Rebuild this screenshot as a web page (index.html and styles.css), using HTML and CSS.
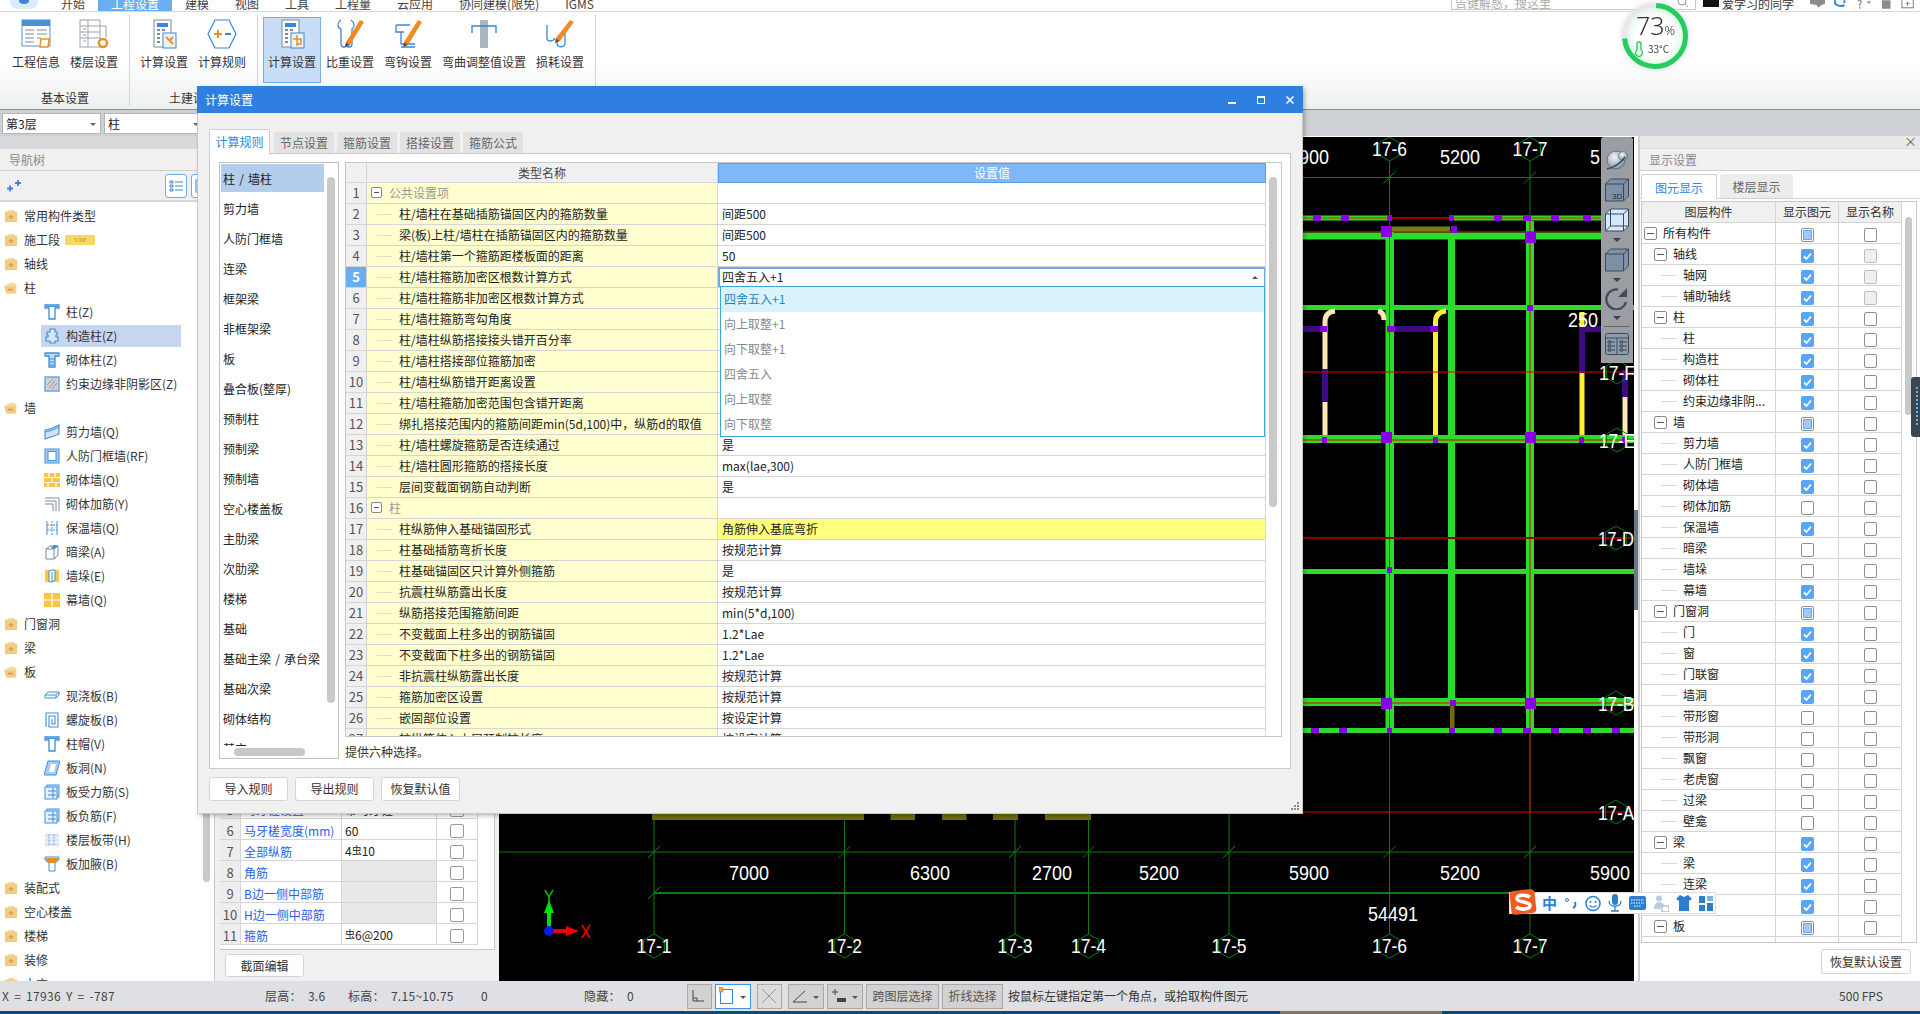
FILE: index.html
```html
<!DOCTYPE html>
<html lang="zh">
<head>
<meta charset="utf-8">
<title>计算设置</title>
<link rel="stylesheet" href="styles.css">
</head>
<body>
<svg class="defs" width="0" height="0">
  <defs>
    <symbol id="f-plus" viewBox="0 0 16 16"><path d="M5 1h7v3H5z" fill="#f5dda0"/><rect x="1" y="3" width="14" height="12" fill="#f0cd86"/><path d="M8 6.500v5M5.500 9h5" stroke="#d99a3a" stroke-width="1.500"/></symbol>
    <symbol id="f-minus" viewBox="0 0 18 16"><path d="M6 1h8v3H6z" fill="#f5dda0"/><path d="M3 3h13v12H3z" fill="#f5dda0"/><path d="M0 5h15v10H3z" fill="#f0cd86"/><path d="M5 10h6" stroke="#d99a3a" stroke-width="2"/></symbol>
    <symbol id="i-t" viewBox="0 0 16 16"><path d="M1 1h14v3H11v11H5V4H1z" fill="#fff" stroke="#3d8fd8" stroke-width="1.300"/><path d="M2 2.500h12" stroke="#3d8fd8"/></symbol>
    <symbol id="i-puz" viewBox="0 0 16 16"><path d="M6 1h5v3h2v3h-1v2h2v4h-3v2H6v-2H2V9h2V7H3V4h3z" fill="#d8e6f6" stroke="#3d8fd8" stroke-width="1.200"/></symbol>
    <symbol id="i-tb" viewBox="0 0 16 16"><path d="M1 1h14v3H11v11H5V4H1z" fill="#bcd9f4" stroke="#3d8fd8" stroke-width="1.300"/><path d="M5 7h6M5 10h6M5 13h6" stroke="#3d8fd8"/></symbol>
    <symbol id="i-hatch" viewBox="0 0 16 16"><rect x="1" y="1" width="14" height="14" fill="#d0d0d0" stroke="#6aa7e6" stroke-width="1.500"/><path d="M3 9l6-6M5 12l6-7M8 13l5-6" stroke="#999" fill="none"/></symbol>
    <symbol id="i-shear" viewBox="0 0 16 16"><path d="M1 6Q8 5 15 1v9Q8 13 1 15z" fill="#cfe2f7" stroke="#3d8fd8" stroke-width="1.100"/><path d="M1 8Q8 7 15 3" stroke="#3d8fd8" fill="none"/></symbol>
    <symbol id="i-rf" viewBox="0 0 16 16"><rect x="1" y="1" width="14" height="14" fill="#a8ccf0" stroke="#3d8fd8"/><rect x="4" y="3.500" width="8" height="9" fill="#fff" stroke="#3d8fd8"/></symbol>
    <symbol id="i-brick" viewBox="0 0 16 16"><rect x="0" y="1" width="16" height="14" fill="#fbc441"/><path d="M0 5.500h16M0 10.500h16M5 1v4.500M11 1v4.500M8 5.500v5M4 10.500V15M12 10.500V15" stroke="#fff" stroke-width="1.200"/></symbol>
    <symbol id="i-add" viewBox="0 0 16 16"><path d="M1 2h14v13M1 5h11v10M1 8h8v7" fill="none" stroke="#7a8a99"/></symbol>
    <symbol id="i-ins" viewBox="0 0 16 16"><path d="M3 1v14M13 1v14" stroke="#3d8fd8"/><path d="M8 1v14M3 5h10M3 10h10" stroke="#3d8fd8" stroke-dasharray="2 1"/></symbol>
    <symbol id="i-box" viewBox="0 0 16 16"><path d="M2 5l4-3h8v9l-4 4H2z" fill="#fff" stroke="#7a8a99"/><path d="M2 5h8v10M10 5l4-3" fill="none" stroke="#7a8a99"/><path d="M10 1l4 1-4 3-3-1z" fill="#3d8fd8"/></symbol>
    <symbol id="i-duo" viewBox="0 0 16 16"><rect x="1" y="2" width="14" height="12" fill="#fbc441"/><path d="M5 3l3-1h3v10l-3 2H5z" fill="#fff" stroke="#3d8fd8"/><path d="M8 4v10" stroke="#3d8fd8"/></symbol>
    <symbol id="i-cw" viewBox="0 0 16 16"><rect y="1" width="16" height="14" fill="#fbc441"/><path d="M0 8h16M8 1v14" stroke="#fff" stroke-width="1.200"/></symbol>
    <symbol id="i-slab" viewBox="0 0 16 16"><path d="M1 7l3-3h11v3l-3 3H1zM1 7h11v3M12 7l3-3" fill="#fff" stroke="#3d8fd8"/></symbol>
    <symbol id="i-sp" viewBox="0 0 16 16"><path d="M2 15V1h12v14H5V4h6v8H8V7" fill="none" stroke="#3d8fd8" stroke-width="1.100"/></symbol>
    <symbol id="i-hole" viewBox="0 0 16 16"><path d="M4 1h12l-4 14H0z" fill="#a8ccf0" stroke="#3d8fd8"/><path d="M7 4h5l-2 8H5z" fill="#fff"/></symbol>
    <symbol id="i-s" viewBox="0 0 16 16"><rect x="3" y="1" width="12" height="12" fill="#cfe2f7" stroke="#3d8fd8"/><rect x="1" y="3" width="12" height="12" fill="#e6f0fb" stroke="#3d8fd8"/><path d="M9 4v10M4 7h8M4 11h8" stroke="#3d8fd8"/></symbol>
    <symbol id="i-band" viewBox="0 0 16 16"><rect x="1" y="2" width="14" height="12" fill="#d8e6f6"/><path d="M1 6h14M1 10h14" stroke="#fff"/><path d="M5 2v12M10 2v12" stroke="#7fa8d6" stroke-dasharray="2 1"/></symbol>
    <symbol id="i-hau" viewBox="0 0 16 16"><path d="M1 1h14v3l-4 3v8H5V7L1 4z" fill="#fff" stroke="#3d8fd8"/><path d="M2 2h12v2l-3 3H5L2 4z" fill="#f08a24"/></symbol>
    <symbol id="chk" viewBox="0 0 13 14"><rect width="13" height="14" rx="2" fill="#58a4f5"/><path d="M3 7.500l2.500 2.500L10 4.500" fill="none" stroke="#fff" stroke-width="1.800"/></symbol>
    <polygon id="hx" points="0,-12 10.400,-6 10.400,6 0,12 -10.400,6 -10.400,-6" fill="none" stroke="#0a7d0a"/>
    <path id="tk" d="M-6 6L6-6" stroke="#0a7d0a"/>
    <radialGradient id="sph" cx=".4" cy=".35" r=".7"><stop offset="0" stop-color="#f2f5f8"/><stop offset="1" stop-color="#7d8ea2"/></radialGradient>
  </defs>
</svg>

<div class="app">
  <header class="menubar">
    <div class="logo"><span class="logo-ball"></span></div>
    <span class="mt">开始</span><span class="mt on">工程设置</span><span class="mt">建模</span><span class="mt">视图</span><span class="mt">工具</span><span class="mt">工程量</span><span class="mt">云应用</span><span class="mt">协同建模(限免)</span><span class="mt">IGMS</span>
    <div class="search"><span>告键解惑，搜这里</span><svg width="12" height="10" viewBox="0 0 12 10"><circle cx="5" cy="1" r="4" fill="none" stroke="#999"/><path d="M8 4l3 3" stroke="#999"/></svg></div>
    <span class="avatar"></span><span class="uname">爱学习的同学</span>
    <div class="tops">
      <svg width="16" height="9" viewBox="0 0 16 9"><path d="M0-4h16v8l-4 1-3 3-2-3-7-1z" fill="#8c8c8c"/></svg>
      <svg width="14" height="9" viewBox="0 0 14 9"><path d="M1 0v2c0 4 8 5 10 3M11 0v3" fill="none" stroke="#2b83dc" stroke-width="2"/></svg>
      <svg width="18" height="9" viewBox="0 0 18 9"><path d="M2 1c3-2 5 1 2 3v2M4 7v2" fill="none" stroke="#999" stroke-width="1.500"/><path d="M11 1h5l-2.500 3z" fill="#999"/></svg>
      <svg width="10" height="9" viewBox="0 0 10 9"><rect width="9" height="9" fill="#8c8c8c"/></svg>
      <svg width="14" height="9" viewBox="0 0 14 9"><rect x="1" y="-2" width="12" height="10" fill="none" stroke="#777"/><path d="M7 6V2M5 4l2-2 2 2" fill="none" stroke="#777"/></svg>
    </div>
  </header>

  <section class="ribbon">
    <div class="rgroup rg1">
      <div class="rbtns">
        <div class="rbtn"><svg class="ri" width="30" height="30" viewBox="0 0 30 30"><rect x="1" y="1" width="28" height="26" fill="#fff" stroke="#5b8fc9"/><rect x="1" y="1" width="28" height="6" fill="#4a90d9"/><path d="M4 11h9M4 15h9M4 19h9M4 23h9M16 11h10M16 15h10M16 19h4" stroke="#7a8a99"/><path d="M20 20h8l-1 8h-8z" fill="#fff" stroke="#e8912a" stroke-width="1.500"/></svg><span>工程信息</span></div>
        <div class="rbtn"><svg class="ri" width="30" height="30" viewBox="0 0 30 30"><rect x="1" y="1" width="20" height="27" fill="#fff" stroke="#9aa3ab"/><path d="M1 7h20M1 13h20M1 19h20M9 1v27M21 7h6v12" fill="none" stroke="#9aa3ab"/><path d="M4 10h3M4 16h3M4 22h3" stroke="#9aa3ab"/><circle cx="24" cy="24" r="4" fill="#fff" stroke="#e8912a" stroke-width="2.500"/></svg><span>楼层设置</span></div>
      </div>
      <div class="rlabel">基本设置</div>
    </div>
    <div class="rgroup">
      <div class="rbtns">
        <div class="rbtn"><svg class="ri" width="30" height="30" viewBox="0 0 30 30"><rect x="5" y="1" width="17" height="27" fill="#fff" stroke="#7a8a99"/><rect x="8" y="4" width="11" height="4" fill="#3a86d8"/><path d="M8 11h3M13 11h3M8 15h3M8 19h3M8 23h3" stroke="#7a8a99" stroke-width="2"/><rect x="14" y="14" width="13" height="15" fill="#eaf3fc" stroke="#3a86d8"/><path d="M17 18l7 7M24 18l-3 3" stroke="#e8912a" stroke-width="2"/></svg><span>计算设置</span></div>
        <div class="rbtn"><svg class="ri" width="30" height="30" viewBox="0 0 30 30"><path d="M8 1h14l7 14-7 14H8L1 15z" fill="#fff" stroke="#3a86d8" stroke-width="1.200"/><path d="M7 15h8M11 11v8" stroke="#e8912a" stroke-width="2"/><path d="M18 15h6" stroke="#3a86d8" stroke-width="2"/></svg><span>计算规则</span></div>
      </div>
      <div class="rlabel">土建设置</div>
    </div>
    <div class="rgroup">
      <div class="rbtns">
        <div class="rbtn sel"><svg class="ri" width="30" height="30" viewBox="0 0 30 30"><rect x="5" y="1" width="17" height="27" fill="#fff" stroke="#7a8a99"/><rect x="8" y="4" width="11" height="4" fill="#3a86d8"/><path d="M8 11h3M13 11h3M8 15h3M8 19h3M8 23h3" stroke="#7a8a99" stroke-width="2"/><rect x="14" y="14" width="13" height="15" fill="#eaf3fc" stroke="#3a86d8"/><path d="M20 16v11M16 20h8v5h-4" fill="none" stroke="#e8912a" stroke-width="1.500"/></svg><span>计算设置</span></div>
        <div class="rbtn"><svg class="ri" width="30" height="30" viewBox="0 0 30 30"><path d="M6 1C2 4 2 8 6 10v15c0 4 6 4 6 0M16 1c4 3 4 7 1 9v15c0 4-6 4-6 0" fill="none" stroke="#3a86d8" stroke-width="1.300"/><path d="M29 3l-4-2-14 22 4 3z" fill="#f08a24"/><path d="M11 23l-1 5 5-2z" fill="#7a4a20"/></svg><span>比重设置</span></div>
        <div class="rbtn"><svg class="ri" width="30" height="30" viewBox="0 0 30 30"><path d="M3 6h14M3 6v7h5v12h14M8 28h14M3 13h8" fill="none" stroke="#3a86d8" stroke-width="1.300"/><path d="M29 3l-4-2-14 22 4 3z" fill="#f08a24"/><path d="M11 23l-1 5 5-2z" fill="#7a4a20"/></svg><span>弯钩设置</span></div>
        <div class="rbtn wide"><svg class="ri" width="30" height="30" viewBox="0 0 30 30"><rect x="11" y="1" width="8" height="28" fill="#a9b5c1"/><path d="M3 14V7h24v7" fill="none" stroke="#3a86d8" stroke-width="1.400"/></svg><span>弯曲调整值设置</span></div>
        <div class="rbtn"><svg class="ri" width="30" height="30" viewBox="0 0 30 30"><path d="M2 6v13c0 4 6 4 8 0M20 14v10c0 5-8 5-8 0v-2" fill="none" stroke="#3a86d8" stroke-width="1.300"/><path d="M29 3l-4-2-14 18 4 3z" fill="#f08a24"/><path d="M11 19l-1 5 5-2z" fill="#7a4a20"/></svg><span>损耗设置</span></div>
      </div>
      <div class="rlabel">钢筋设置</div>
    </div>
  </section>

  <section class="combos">
    <div class="combo c1">第3层<i></i></div>
    <div class="combo c2">柱<i></i></div>
  </section>

  <main class="main">
    <aside class="nav">
      <div class="band"></div>
      <div class="ptitle">导航树</div>
      <div class="navtools">
        <svg class="spark" width="14" height="12" viewBox="0 0 14 12"><path d="M0 8.500h6M3 5.500v6M8 3h6M11 0v6" stroke="#3a86d8" stroke-width="1.800"/></svg>
        <span class="nbtn"><svg width="14" height="14" viewBox="0 0 14 14"><path d="M1 2h3v2H1zM1 6h3v2H1zM1 10h3v2H1zM6 3h8M6 7h8M6 11h8" fill="none" stroke="#3a86d8"/></svg></span>
        <span class="nbtn"><svg width="14" height="14" viewBox="0 0 14 14"><rect x="1" y="1" width="12" height="12" fill="none" stroke="#3a86d8"/></svg></span>
      </div>
      <ul class="tree">
        <li><svg class="fd" width="14" height="16"><use href="#f-plus"/></svg>常用构件类型</li>
        <li><svg class="fd" width="14" height="16"><use href="#f-plus"/></svg>施工段<span class="vip">VIP</span></li>
        <li><svg class="fd" width="14" height="16"><use href="#f-plus"/></svg>轴线</li>
        <li><svg class="fd" width="17" height="16"><use href="#f-minus"/></svg>柱</li>
        <li class="s"><svg width="16" height="16"><use href="#i-t"/></svg>柱(Z)</li>
        <li class="s cur"><svg width="16" height="16"><use href="#i-puz"/></svg>构造柱(Z)</li>
        <li class="s"><svg width="16" height="16"><use href="#i-tb"/></svg>砌体柱(Z)</li>
        <li class="s"><svg width="16" height="16"><use href="#i-hatch"/></svg>约束边缘非阴影区(Z)</li>
        <li><svg class="fd" width="17" height="16"><use href="#f-minus"/></svg>墙</li>
        <li class="s"><svg width="16" height="16"><use href="#i-shear"/></svg>剪力墙(Q)</li>
        <li class="s"><svg width="16" height="16"><use href="#i-rf"/></svg>人防门框墙(RF)</li>
        <li class="s"><svg width="16" height="16"><use href="#i-brick"/></svg>砌体墙(Q)</li>
        <li class="s"><svg width="16" height="16"><use href="#i-add"/></svg>砌体加筋(Y)</li>
        <li class="s"><svg width="16" height="16"><use href="#i-ins"/></svg>保温墙(Q)</li>
        <li class="s"><svg width="16" height="16"><use href="#i-box"/></svg>暗梁(A)</li>
        <li class="s"><svg width="16" height="16"><use href="#i-duo"/></svg>墙垛(E)</li>
        <li class="s"><svg width="16" height="16"><use href="#i-cw"/></svg>幕墙(Q)</li>
        <li><svg class="fd" width="14" height="16"><use href="#f-plus"/></svg>门窗洞</li>
        <li><svg class="fd" width="14" height="16"><use href="#f-plus"/></svg>梁</li>
        <li><svg class="fd" width="17" height="16"><use href="#f-minus"/></svg>板</li>
        <li class="s"><svg width="16" height="16"><use href="#i-slab"/></svg>现浇板(B)</li>
        <li class="s"><svg width="16" height="16"><use href="#i-sp"/></svg>螺旋板(B)</li>
        <li class="s"><svg width="16" height="16"><use href="#i-t"/></svg>柱帽(V)</li>
        <li class="s"><svg width="16" height="16"><use href="#i-hole"/></svg>板洞(N)</li>
        <li class="s"><svg width="16" height="16"><use href="#i-s"/></svg>板受力筋(S)</li>
        <li class="s"><svg width="16" height="16"><use href="#i-s"/></svg>板负筋(F)</li>
        <li class="s"><svg width="16" height="16"><use href="#i-band"/></svg>楼层板带(H)</li>
        <li class="s"><svg width="16" height="16"><use href="#i-hau"/></svg>板加腋(B)</li>
        <li><svg class="fd" width="14" height="16"><use href="#f-plus"/></svg>装配式</li>
        <li><svg class="fd" width="14" height="16"><use href="#f-plus"/></svg>空心楼盖</li>
        <li><svg class="fd" width="14" height="16"><use href="#f-plus"/></svg>楼梯</li>
        <li><svg class="fd" width="14" height="16"><use href="#f-plus"/></svg>装修</li>
        <li><svg class="fd" width="14" height="16"><use href="#f-plus"/></svg>土方</li>
      </ul>
      <div class="navsb"></div>
    </aside>

    <section class="props">
      <div class="pbox">
      <table class="ptable">
        <tr><td class="n">1</td><td class="k">名称</td><td>GZ-1</td><td class="c"><span class="cb"></span></td></tr>
        <tr><td class="n">2</td><td class="k">类别</td><td>构造柱</td><td class="c"><span class="cb"></span></td></tr>
        <tr><td class="n">3</td><td class="k">截面宽度(mm)</td><td>240</td><td class="c"><span class="cb"></span></td></tr>
        <tr><td class="n">4</td><td class="k">截面高度(mm)</td><td>240</td><td class="c"><span class="cb"></span></td></tr>
        <tr><td class="n">5</td><td class="k">马牙槎设置</td><td>带马牙槎</td><td class="c"><span class="cb"></span></td></tr>
        <tr><td class="n">6</td><td class="k">马牙槎宽度(mm)</td><td>60</td><td class="c"><span class="cb"></span></td></tr>
        <tr><td class="n">7</td><td class="k">全部纵筋</td><td>4<span class="rb">虫</span>10</td><td class="c"><span class="cb"></span></td></tr>
        <tr><td class="n">8</td><td class="k">角筋</td><td class="off"></td><td class="c"><span class="cb"></span></td></tr>
        <tr><td class="n">9</td><td class="k">B边一侧中部筋</td><td class="off"></td><td class="c"><span class="cb"></span></td></tr>
        <tr><td class="n">10</td><td class="k">H边一侧中部筋</td><td class="off"></td><td class="c"><span class="cb"></span></td></tr>
        <tr><td class="n">11</td><td class="k">箍筋</td><td><span class="rb">虫</span>6@200</td><td class="c"><span class="cb"></span></td></tr>
      </table>
      </div>
      <div class="pfoot"><button class="btn secbtn">截面编辑</button></div>
    </section>

    <section class="canvas">
      <svg class="cad" width="1135" height="844" viewBox="499 137 1135 844">
        <rect x="499" y="137" width="1135" height="844" fill="#000"/>
        <g stroke="#0a7d0a" fill="none">
          <path d="M499 177.500H1601M499 852H1634"/>
          <path d="M654 893H1634" stroke-width="2"/>
          <path d="M654 814V934M844.500 814V934M1015 814V934M1088.500 814V934M1229 814V934M1389.500 161V934M1530 161V934"/>
        </g>
        <g fill="#6e6a10">
          <rect x="652" y="810" width="212" height="10"/><rect x="890.500" y="810" width="24.500" height="10"/><rect x="942" y="810" width="24.500" height="10"/><rect x="993" y="810" width="25" height="10"/><rect x="1045" y="810" width="46" height="10"/>
        </g>
        <g fill="#2bdc2b">
          <rect x="1303" y="215.500" width="85" height="5"/><rect x="1450" y="215.500" width="151" height="5"/>
          <rect x="1303" y="232.500" width="298" height="7"/>
          <rect x="1303" y="305" width="331" height="5"/>
          <rect x="1303" y="435" width="331" height="8"/>
          <rect x="1303" y="569" width="331" height="5"/>
          <rect x="1303" y="698" width="331" height="8"/>
          <rect x="1303" y="728" width="331" height="5"/>
          <rect x="1385.500" y="232" width="8.500" height="501"/>
          <rect x="1448" y="239" width="7" height="467"/>
          <rect x="1526" y="221" width="8" height="512"/>
        </g>
        <rect x="1390" y="226.500" width="60" height="5.500" fill="#7a7a10"/>
        <rect x="1450" y="706" width="4.500" height="22" fill="#6e6a10"/>
        <path d="M1325 435V322Q1325 312 1335 311M1378 311Q1384 312 1384 320" fill="none" stroke="#fde6b8" stroke-width="5"/>
        <path d="M1435.500 435V322Q1435.500 312 1446 311" fill="none" stroke="#ffef30" stroke-width="5"/>
        <path d="M1582 435V312" fill="none" stroke="#ffef30" stroke-width="5"/>
        <path d="M1625 435V395" fill="none" stroke="#fde6b8" stroke-width="5"/>
        <g fill="#3d0a82">
          <rect x="1303" y="326" width="20" height="6"/><rect x="1392" y="326" width="42" height="6"/>
          <rect x="1322" y="369" width="6" height="33"/>
          <rect x="1579" y="327" width="6" height="46"/>
          <rect x="1622" y="370" width="6" height="27"/>
          <rect x="1585" y="326" width="16" height="6"/>
        </g>
        <g stroke="#e00000" fill="none">
          <path d="M1303 218H1388" stroke="#c03000"/><path d="M1390 218H1450" stroke="#a00000" stroke-width="2"/><path d="M1450 218H1601" stroke="#c03000"/>
          <path d="M1303 231.800H1601M499 372H1634M1303 440H1634M1303 703H1634M1303 812H1634"/>
          <path d="M1389.500 218V812M1530 218V812"/>
          <path d="M1303 538H1634" stroke="#8b0000" stroke-width="2"/>
        </g>
        <g fill="#8a00e6">
          <rect x="1381" y="226" width="11" height="11"/><rect x="1525" y="232" width="11" height="11"/><rect x="1451" y="226" width="6" height="7"/>
          <rect x="1313" y="215" width="8" height="6"/><rect x="1341" y="215" width="8" height="6"/><rect x="1387" y="215" width="5" height="6"/><rect x="1449" y="215" width="5" height="6"/><rect x="1494" y="215" width="8" height="6"/><rect x="1523" y="215" width="8" height="6"/><rect x="1551" y="215" width="8" height="6"/><rect x="1583" y="215" width="8" height="6"/>
          <rect x="1527" y="305" width="6" height="6"/>
          <rect x="1320" y="326" width="7" height="6"/><rect x="1387" y="326" width="8" height="6"/><rect x="1430" y="326" width="8" height="6"/>
          <rect x="1322" y="437" width="5" height="6"/><rect x="1433" y="437" width="5" height="6"/><rect x="1579" y="437" width="5" height="6"/><rect x="1622" y="437" width="5" height="6"/>
          <rect x="1381" y="432" width="11" height="11"/><rect x="1525" y="432" width="11" height="11"/>
          <rect x="1387" y="567" width="5" height="6"/>
          <rect x="1381" y="698" width="11" height="11"/><rect x="1525" y="698" width="11" height="11"/><rect x="1450" y="700" width="6" height="6"/>
          <rect x="1311" y="728" width="8" height="5"/><rect x="1339" y="728" width="8" height="5"/><rect x="1387" y="728" width="5" height="5"/><rect x="1449" y="728" width="6" height="5"/><rect x="1494" y="728" width="8" height="5"/><rect x="1523" y="728" width="8" height="5"/><rect x="1551" y="728" width="8" height="5"/><rect x="1583" y="728" width="8" height="5"/><rect x="1612" y="728" width="8" height="5"/>
        </g>
        <g>
          <use href="#hx" x="654" y="946"/><use href="#hx" x="844.500" y="946"/><use href="#hx" x="1015" y="946"/><use href="#hx" x="1088.500" y="946"/><use href="#hx" x="1229" y="946"/><use href="#hx" x="1389.500" y="946"/><use href="#hx" x="1530" y="946"/>
          <use href="#hx" x="1389.500" y="149"/><use href="#hx" x="1530" y="149"/>
          <use href="#hx" x="1617" y="372"/><use href="#hx" x="1617" y="440"/><use href="#hx" x="1616" y="538"/><use href="#hx" x="1616" y="703"/><use href="#hx" x="1616" y="812"/>
          <use href="#tk" x="1389.500" y="177.500"/><use href="#tk" x="1530" y="177.500"/>
          <use href="#tk" x="654" y="852"/><use href="#tk" x="844.500" y="852"/><use href="#tk" x="1015" y="852"/><use href="#tk" x="1088.500" y="852"/><use href="#tk" x="1229" y="852"/><use href="#tk" x="1389.500" y="852"/><use href="#tk" x="1530" y="852"/><use href="#tk" x="654" y="893"/>
        </g>
        <g class="ax" text-anchor="middle">
          <text x="654" y="953" textLength="35" lengthAdjust="spacingAndGlyphs">17-1</text>
          <text x="844.500" y="953" textLength="35" lengthAdjust="spacingAndGlyphs">17-2</text>
          <text x="1015" y="953" textLength="35" lengthAdjust="spacingAndGlyphs">17-3</text>
          <text x="1088.500" y="953" textLength="35" lengthAdjust="spacingAndGlyphs">17-4</text>
          <text x="1229" y="953" textLength="35" lengthAdjust="spacingAndGlyphs">17-5</text>
          <text x="1389.500" y="953" textLength="35" lengthAdjust="spacingAndGlyphs">17-6</text>
          <text x="1530" y="953" textLength="35" lengthAdjust="spacingAndGlyphs">17-7</text>
          <text x="1389.500" y="156" textLength="35" lengthAdjust="spacingAndGlyphs">17-6</text>
          <text x="1530" y="156" textLength="35" lengthAdjust="spacingAndGlyphs">17-7</text>
          <text x="1617" y="380" textLength="36" lengthAdjust="spacingAndGlyphs">17-F</text>
          <text x="1617" y="448" textLength="36" lengthAdjust="spacingAndGlyphs">17-E</text>
          <text x="1616" y="546" textLength="36" lengthAdjust="spacingAndGlyphs">17-D</text>
          <text x="1616" y="711" textLength="36" lengthAdjust="spacingAndGlyphs">17-B</text>
          <text x="1616" y="820" textLength="36" lengthAdjust="spacingAndGlyphs">17-A</text>
        </g>
        <g class="dm" text-anchor="middle">
          <text x="749" y="880" textLength="40" lengthAdjust="spacingAndGlyphs">7000</text>
          <text x="930" y="880" textLength="40" lengthAdjust="spacingAndGlyphs">6300</text>
          <text x="1052" y="880" textLength="40" lengthAdjust="spacingAndGlyphs">2700</text>
          <text x="1159" y="880" textLength="40" lengthAdjust="spacingAndGlyphs">5200</text>
          <text x="1309" y="880" textLength="40" lengthAdjust="spacingAndGlyphs">5900</text>
          <text x="1460" y="880" textLength="40" lengthAdjust="spacingAndGlyphs">5200</text>
          <text x="1610" y="880" textLength="40" lengthAdjust="spacingAndGlyphs">5900</text>
          <text x="1393" y="921" textLength="50" lengthAdjust="spacingAndGlyphs">54491</text>
          <text x="1460" y="164" textLength="40" lengthAdjust="spacingAndGlyphs">5200</text>
          <text x="1309" y="164" textLength="40" lengthAdjust="spacingAndGlyphs">5900</text>
          <text x="1595" y="164" textLength="10" lengthAdjust="spacingAndGlyphs">5</text>
          <text x="1583" y="327" textLength="30" lengthAdjust="spacingAndGlyphs">250</text>
        </g>
        <g>
          <path d="M549 930V912" stroke="#00e000" stroke-width="4"/><path d="M549 900l-5 13h10z" fill="#00e000"/>
          <path d="M549 931H568" stroke="#f00000" stroke-width="4"/><path d="M579 931l-13-5v10z" fill="#f00000"/>
          <circle cx="549" cy="931" r="5" fill="#0a1ae0"/>
          <path d="M545 890l4 7 4-7M549 897v6" fill="none" stroke="#00d000" stroke-width="1.500"/>
          <path d="M582 925l8 13M590 925l-8 13" fill="none" stroke="#f00000" stroke-width="1.500"/>
        </g>
      </svg>
      <div class="vtools">
        <svg class="v1" width="24" height="22" viewBox="0 0 24 22"><circle cx="11" cy="11" r="9" fill="url(#sph)" stroke="#55636f" stroke-width=".8"/><circle cx="18" cy="7" r="4.500" fill="url(#sph)" stroke="#55636f" stroke-width=".6"/><path d="M2 20C8 19 16 14 20 8" fill="none" stroke="#3e4a55" stroke-width="1.500"/></svg>
        <svg class="v2" width="24" height="24" viewBox="0 0 24 24"><path d="M.5 6l5-5h18v17l-5 5H.500z" fill="#7e90a6" stroke="#3a4a5c"/><path d="M.5 6h18v17M18.500 6l5-5" fill="none" stroke="#3a4a5c"/><text x="7" y="21" class="t3d">3D</text></svg>
        <svg class="v3" width="24" height="24" viewBox="0 0 24 24"><path d="M.5 6l5-5h18v17l-5 5H.500z" fill="#d6e8fa" stroke="#3a4a5c"/><path d="M.5 6h18v17M18.500 6l5-5M5.500 1v17h18M5.500 18l-5 5" fill="none" stroke="#3a4a5c"/></svg>
        <span class="vtri v4"></span>
        <svg class="v5" width="24" height="24" viewBox="0 0 24 24"><path d="M.5 6l5-5h18v17l-5 5H.500z" fill="#7e90a6" stroke="#3a4a5c"/><path d="M.5 6h18v17M18.500 6l5-5" fill="none" stroke="#3a4a5c"/></svg>
        <span class="vtri v6"></span>
        <svg class="v7" width="24" height="22" viewBox="0 0 24 22"><path d="M21 14A10 10 0 1 1 13 1.500" fill="none" stroke="#414e5a" stroke-width="2.400"/><path d="M22 0v9h-9z" fill="#414e5a"/></svg>
        <span class="vtri v8"></span>
        <span class="vsep"></span>
        <svg class="v9" width="24" height="24" viewBox="0 0 24 24"><rect x=".5" y="2.500" width="23" height="21" rx="2" fill="#8d9cac" stroke="#3a4a5c"/><path d="M.5 7h23M12 7v16" stroke="#3a4a5c"/><path d="M3 10h3v2H3zM3 14h3v2H3zM3 18h3v2H3zM15 10h3v2h-3zM15 14h3v2h-3zM15 18h3v2h-3zM7 11h3M7 15h3M7 19h3M19 11h3M19 15h3M19 19h3" fill="none" stroke="#2a3846" stroke-width=".9"/></svg>
      </div>
    </section>

    <div class="split"><span class="splitbar"></span></div>

    <aside class="disp">
      <div class="dtop"><span class="dx">×</span></div>
      <div class="ptitle">显示设置</div>
      <div class="dtabs"><span class="dt on">图元显示</span><span class="dt">楼层显示</span></div>
      <div class="dbox">
        <table class="dtable">
          <thead><tr><th>图层构件</th><th>显示图元</th><th>显示名称</th></tr></thead>
          <tbody>
            <tr class="l0"><td><b class="mb"></b>所有构件</td><td><i class="h"></i></td><td><i></i></td></tr>
            <tr class="l1"><td><b class="mb"></b>轴线</td><td><svg class="ck" width="13" height="14"><use href="#chk"/></svg></td><td><i class="dis"></i></td></tr>
            <tr class="l2"><td>轴网</td><td><svg class="ck" width="13" height="14"><use href="#chk"/></svg></td><td><i class="dis"></i></td></tr>
            <tr class="l2"><td>辅助轴线</td><td><svg class="ck" width="13" height="14"><use href="#chk"/></svg></td><td><i class="dis"></i></td></tr>
            <tr class="l1"><td><b class="mb"></b>柱</td><td><svg class="ck" width="13" height="14"><use href="#chk"/></svg></td><td><i></i></td></tr>
            <tr class="l2"><td>柱</td><td><svg class="ck" width="13" height="14"><use href="#chk"/></svg></td><td><i></i></td></tr>
            <tr class="l2"><td>构造柱</td><td><svg class="ck" width="13" height="14"><use href="#chk"/></svg></td><td><i></i></td></tr>
            <tr class="l2"><td>砌体柱</td><td><svg class="ck" width="13" height="14"><use href="#chk"/></svg></td><td><i></i></td></tr>
            <tr class="l2"><td>约束边缘非阴...</td><td><svg class="ck" width="13" height="14"><use href="#chk"/></svg></td><td><i></i></td></tr>
            <tr class="l1"><td><b class="mb"></b>墙</td><td><i class="h"></i></td><td><i></i></td></tr>
            <tr class="l2"><td>剪力墙</td><td><svg class="ck" width="13" height="14"><use href="#chk"/></svg></td><td><i></i></td></tr>
            <tr class="l2"><td>人防门框墙</td><td><svg class="ck" width="13" height="14"><use href="#chk"/></svg></td><td><i></i></td></tr>
            <tr class="l2"><td>砌体墙</td><td><svg class="ck" width="13" height="14"><use href="#chk"/></svg></td><td><i></i></td></tr>
            <tr class="l2"><td>砌体加筋</td><td><i></i></td><td><i></i></td></tr>
            <tr class="l2"><td>保温墙</td><td><svg class="ck" width="13" height="14"><use href="#chk"/></svg></td><td><i></i></td></tr>
            <tr class="l2"><td>暗梁</td><td><i></i></td><td><i></i></td></tr>
            <tr class="l2"><td>墙垛</td><td><i></i></td><td><i></i></td></tr>
            <tr class="l2"><td>幕墙</td><td><svg class="ck" width="13" height="14"><use href="#chk"/></svg></td><td><i></i></td></tr>
            <tr class="l1"><td><b class="mb"></b>门窗洞</td><td><i class="h"></i></td><td><i></i></td></tr>
            <tr class="l2"><td>门</td><td><svg class="ck" width="13" height="14"><use href="#chk"/></svg></td><td><i></i></td></tr>
            <tr class="l2"><td>窗</td><td><svg class="ck" width="13" height="14"><use href="#chk"/></svg></td><td><i></i></td></tr>
            <tr class="l2"><td>门联窗</td><td><svg class="ck" width="13" height="14"><use href="#chk"/></svg></td><td><i></i></td></tr>
            <tr class="l2"><td>墙洞</td><td><svg class="ck" width="13" height="14"><use href="#chk"/></svg></td><td><i></i></td></tr>
            <tr class="l2"><td>带形窗</td><td><i></i></td><td><i></i></td></tr>
            <tr class="l2"><td>带形洞</td><td><i></i></td><td><i></i></td></tr>
            <tr class="l2"><td>飘窗</td><td><i></i></td><td><i></i></td></tr>
            <tr class="l2"><td>老虎窗</td><td><i></i></td><td><i></i></td></tr>
            <tr class="l2"><td>过梁</td><td><i></i></td><td><i></i></td></tr>
            <tr class="l2"><td>壁龛</td><td><i></i></td><td><i></i></td></tr>
            <tr class="l1"><td><b class="mb"></b>梁</td><td><svg class="ck" width="13" height="14"><use href="#chk"/></svg></td><td><i></i></td></tr>
            <tr class="l2"><td>梁</td><td><svg class="ck" width="13" height="14"><use href="#chk"/></svg></td><td><i></i></td></tr>
            <tr class="l2"><td>连梁</td><td><svg class="ck" width="13" height="14"><use href="#chk"/></svg></td><td><i></i></td></tr>
            <tr class="l2"><td>圈梁</td><td><svg class="ck" width="13" height="14"><use href="#chk"/></svg></td><td><i></i></td></tr>
            <tr class="l1"><td><b class="mb"></b>板</td><td><i class="h"></i></td><td><i></i></td></tr>
            <tr class="l2"><td></td><td><i></i></td><td><i></i></td></tr>
          </tbody>
        </table>
        <span class="dsb"></span>
      </div>
      <div class="dfoot"><button class="btn rstbtn">恢复默认设置</button></div>
    </aside>
  </main>

  <footer class="status">
    <span class="sx w1">X = 17936 Y = -787</span>
    <span class="sx w2">层高：&nbsp;&nbsp;3.6</span>
    <span class="sx w3">标高：&nbsp;&nbsp;7.15~10.75</span>
    <span class="sx w4">0</span>
    <span class="sx w5">隐藏：&nbsp;&nbsp;0</span>
    <span class="sb b1"><svg width="14" height="14" viewBox="0 0 14 14"><path d="M2 1v11h11M2 9h4v3" fill="none" stroke="#444"/></svg></span>
    <span class="sb b2"><svg width="16" height="18" viewBox="0 0 16 18"><rect x="1.500" y="2.500" width="12" height="14" fill="#fff" stroke="#3a86d8"/><rect x="0" y="0" width="4" height="5" fill="#f8a050" stroke="#e07020" stroke-width=".6"/></svg><u></u></span>
    <span class="sb b3"><svg width="16" height="16" viewBox="0 0 16 16"><path d="M1 1l14 14M15 1L1 15" stroke="#999"/></svg></span>
    <span class="sb b4 b4a"><svg width="16" height="14" viewBox="0 0 16 14"><path d="M1 13L13 2M1 13h14" fill="none" stroke="#444"/></svg><u></u></span>
    <span class="sb b4"><svg width="16" height="14" viewBox="0 0 16 14"><path d="M1 3h6M4 0v6" stroke="#444"/><rect x="6" y="9" width="9" height="4" fill="#444"/></svg><u></u></span>
    <span class="sb tx w73">跨图层选择</span>
    <span class="sb tx w61">折线选择</span>
    <span class="hint">按鼠标左键指定第一个角点，或拾取构件图元</span>
    <span class="fps">500 FPS</span>
  </footer>
  <div class="taskbar"><span class="tk1"></span><span class="tk2"></span></div>
</div>

<section class="dialog">
  <div class="dlgtitle"><span>计算设置</span>
    <div class="winbtns">
      <svg width="10" height="10" viewBox="0 0 10 10"><path d="M1 8h8" stroke="#fff" stroke-width="2"/></svg>
      <svg width="10" height="10" viewBox="0 0 10 10"><rect x="1.500" y="1.500" width="7" height="7" fill="none" stroke="#fff"/><path d="M1 2h8" stroke="#fff" stroke-width="2"/></svg>
      <svg width="10" height="10" viewBox="0 0 10 10"><path d="M1.500 1.500l7 7M8.500 1.500l-7 7" stroke="#fff" stroke-width="1.500"/></svg>
    </div>
  </div>
  <nav class="dlgtabs"><span class="tab on">计算规则</span><span class="tab">节点设置</span><span class="tab">箍筋设置</span><span class="tab">搭接设置</span><span class="tab">箍筋公式</span></nav>
  <div class="pane">
    <div class="clist">
      <ul>
        <li class="on">柱 / 墙柱</li><li>剪力墙</li><li>人防门框墙</li><li>连梁</li><li>框架梁</li><li>非框架梁</li><li>板</li><li>叠合板(整厚)</li><li>预制柱</li><li>预制梁</li><li>预制墙</li><li>空心楼盖板</li><li>主肋梁</li><li>次肋梁</li><li>楼梯</li><li>基础</li><li>基础主梁 / 承台梁</li><li>基础次梁</li><li>砌体结构</li><li>其它</li>
      </ul>
      <span class="lsbv"></span><span class="lsbh"></span>
    </div>
    <div class="cright">
      <div class="gwrap">
        <table class="grid">
          <thead><tr><th class="no"></th><th class="nh">类型名称</th><th class="vh">设置值</th></tr></thead>
          <tbody>
            <tr class="gp"><td class="no">1</td><td class="nm"><b class="mb"></b>公共设置项</td><td></td></tr>
            <tr><td class="no">2</td><td class="nm">柱/墙柱在基础插筋锚固区内的箍筋数量</td><td>间距500</td></tr>
            <tr><td class="no">3</td><td class="nm">梁(板)上柱/墙柱在插筋锚固区内的箍筋数量</td><td>间距500</td></tr>
            <tr><td class="no">4</td><td class="nm">柱/墙柱第一个箍筋距楼板面的距离</td><td>50</td></tr>
            <tr><td class="no act">5</td><td class="nm">柱/墙柱箍筋加密区根数计算方式</td><td class="ed">四舍五入+1</td></tr>
            <tr><td class="no">6</td><td class="nm">柱/墙柱箍筋非加密区根数计算方式</td><td></td></tr>
            <tr><td class="no">7</td><td class="nm">柱/墙柱箍筋弯勾角度</td><td></td></tr>
            <tr><td class="no">8</td><td class="nm">柱/墙柱纵筋搭接接头错开百分率</td><td></td></tr>
            <tr><td class="no">9</td><td class="nm">柱/墙柱搭接部位箍筋加密</td><td></td></tr>
            <tr><td class="no">10</td><td class="nm">柱/墙柱纵筋错开距离设置</td><td></td></tr>
            <tr><td class="no">11</td><td class="nm">柱/墙柱箍筋加密范围包含错开距离</td><td></td></tr>
            <tr><td class="no">12</td><td class="nm">绑扎搭接范围内的箍筋间距min(5d,100)中，纵筋d的取值</td><td></td></tr>
            <tr><td class="no">13</td><td class="nm">柱/墙柱螺旋箍筋是否连续通过</td><td>是</td></tr>
            <tr><td class="no">14</td><td class="nm">柱/墙柱圆形箍筋的搭接长度</td><td>max(lae,300)</td></tr>
            <tr><td class="no">15</td><td class="nm">层间变截面钢筋自动判断</td><td>是</td></tr>
            <tr class="gp"><td class="no">16</td><td class="nm"><b class="mb"></b>柱</td><td></td></tr>
            <tr><td class="no">17</td><td class="nm">柱纵筋伸入基础锚固形式</td><td class="hl">角筋伸入基底弯折</td></tr>
            <tr><td class="no">18</td><td class="nm">柱基础插筋弯折长度</td><td>按规范计算</td></tr>
            <tr><td class="no">19</td><td class="nm">柱基础锚固区只计算外侧箍筋</td><td>是</td></tr>
            <tr><td class="no">20</td><td class="nm">抗震柱纵筋露出长度</td><td>按规范计算</td></tr>
            <tr><td class="no">21</td><td class="nm">纵筋搭接范围箍筋间距</td><td>min(5*d,100)</td></tr>
            <tr><td class="no">22</td><td class="nm">不变截面上柱多出的钢筋锚固</td><td>1.2*Lae</td></tr>
            <tr><td class="no">23</td><td class="nm">不变截面下柱多出的钢筋锚固</td><td>1.2*Lae</td></tr>
            <tr><td class="no">24</td><td class="nm">非抗震柱纵筋露出长度</td><td>按规范计算</td></tr>
            <tr><td class="no">25</td><td class="nm">箍筋加密区设置</td><td>按规范计算</td></tr>
            <tr><td class="no">26</td><td class="nm">嵌固部位设置</td><td>按设定计算</td></tr>
            <tr><td class="no">27</td><td class="nm">柱纵筋伸入上层预制柱长度</td><td>按设定计算</td></tr>
          </tbody>
        </table>
        <ul class="popup"><li class="on">四舍五入+1</li><li>向上取整+1</li><li>向下取整+1</li><li>四舍五入</li><li>向上取整</li><li>向下取整</li></ul>
        <span class="gsb"></span>
      </div>
      <p class="ghint">提供六种选择。</p>
    </div>
  </div>
  <div class="dlgfoot"><button class="btn">导入规则</button><button class="btn">导出规则</button><button class="btn">恢复默认值</button></div>
  <svg class="grip" width="8" height="8" viewBox="0 0 8 8"><path d="M6 0h2v2H6zM3 3h2v2H3zM6 3h2v2H6zM0 6h2v2H0zM3 6h2v2H3zM6 6h2v2H6z" fill="#8a8a8a"/></svg>
</section>

<div class="cpu">
  <svg width="70" height="70" viewBox="0 0 70 70">
    <defs><radialGradient id="cg" cx=".5" cy=".5" r=".5"><stop offset=".6" stop-color="#fff"/><stop offset="1" stop-color="#dff5e6"/></radialGradient></defs>
    <circle cx="35" cy="35" r="30.500" fill="url(#cg)" stroke="#e8e8e8" stroke-width="5"/>
    <circle cx="35" cy="35" r="30.500" fill="none" stroke="#22cf5e" stroke-width="5" stroke-dasharray="139.900 191.600" transform="rotate(-88 35 35)"/>
    <path d="M30 48v-6a2 2 0 0 1 4 0v6a3.500 3.500 0 1 1-4 0z" transform="translate(-13 1)" fill="none" stroke="#22cf5e" stroke-width="1.400"/>
  </svg>
  <span class="cpun">73<small>%</small></span>
  <span class="cput">33°C</span>
</div>

<div class="sogou">
  <svg class="slogo" width="28" height="28" viewBox="0 0 28 28"><rect x="1.500" y="2" width="25" height="24" rx="4" transform="rotate(-6 14 14)" fill="#f25a1f"/><path d="M21 9c-3-2-13-3-13 1.500S21 13 21 17.500 11 22 7 19" fill="none" stroke="#fff" stroke-width="3.600"/></svg>
  <span class="szh">中</span>
  <svg width="14" height="16" viewBox="0 0 14 16"><circle cx="3" cy="5" r="1.500" fill="none" stroke="#2b7fd0"/><path d="M11 7c1 3 0 5-2 6" fill="none" stroke="#2b7fd0" stroke-width="2"/></svg>
  <svg width="16" height="17" viewBox="0 0 16 17"><circle cx="8" cy="8.500" r="7" fill="none" stroke="#2b7fd0" stroke-width="1.500"/><circle cx="5.500" cy="7" r="1" fill="#2b7fd0"/><circle cx="10.500" cy="7" r="1" fill="#2b7fd0"/><path d="M4.500 10.500q3.500 3 7 0" fill="none" stroke="#2b7fd0" stroke-width="1.200"/></svg>
  <svg width="14" height="18" viewBox="0 0 14 18"><rect x="4" y="0" width="6" height="11" rx="3" fill="#2b7fd0"/><path d="M1 7c0 7 12 7 12 0M7 12v5M3 17h8" fill="none" stroke="#2b7fd0" stroke-width="1.300"/></svg>
  <svg width="17" height="14" viewBox="0 0 17 14"><rect width="17" height="14" rx="2" fill="#2b7fd0"/><path d="M2 4h13M2 7h13M5 10h7" stroke="#fff" stroke-dasharray="1.500 1"/></svg>
  <svg width="16" height="17" viewBox="0 0 16 17"><circle cx="6" cy="3.500" r="3" fill="#b9cde2"/><path d="M1 14c0-6 3-7 5-7s5 1 5 4H8v3z" fill="#b9cde2"/><rect x="9" y="11" width="7" height="6" fill="#fff" stroke="#8fa8c2"/></svg>
  <svg width="16" height="16" viewBox="0 0 16 16"><path d="M4 0l4 2 4-2 4 4-3 2v10H3V6L0 4z" fill="#2b7fd0"/></svg>
  <svg width="14" height="15" viewBox="0 0 14 15"><rect width="6" height="7" fill="#2b7fd0"/><rect x="8" width="6" height="5" fill="#7fb3e6"/><rect y="9" width="6" height="6" fill="#2b7fd0"/><rect x="8" y="7" width="6" height="8" fill="#2b7fd0"/></svg>
</div>

<div class="edge"><span></span></div>
</body>
</html>
```

FILE: styles.css
```css
* { box-sizing: border-box; }
html, body { margin: 0; padding: 0; width: 1920px; height: 1014px; overflow: hidden; background: #fff; }
body { position: relative; font: 12px/16px "Noto Sans CJK SC", "Noto Sans", sans-serif; color: #222; }
.defs { position: absolute; }
ul { list-style: none; margin: 0; padding: 0; }
table { border-collapse: separate; border-spacing: 0; table-layout: fixed; }
.app { display: flex; flex-direction: column; height: 1014px; }

/* menu */
.menubar { height: 12px; flex: none; display: flex; align-items: flex-start; border-bottom: 1px solid #d8d8d8; }
.logo { width: 48px; height: 11px; flex: none; padding-left: 10px; }
.logo-ball { display: block; width: 28px; height: 9px; background: #dce9f6; border-radius: 0 0 8px 8px; position: relative; }
.logo-ball::after { content: ""; position: absolute; left: 9px; top: -2px; width: 10px; height: 6px; border-radius: 50%; background: #3a86d8; }
.mt { height: 11px; line-height: 7px; padding: 0 13px; color: #444; flex: none; overflow: visible; }
.mt.on { background: #6aaef0; color: #fff; }
.search { margin-left: auto; width: 245px; height: 10px; border: 1px solid #c8c8c8; border-top: 0; display: flex; justify-content: space-between; padding: 0 6px 0 3px; line-height: 5px; color: #aaa; margin-right: 7px; flex: none; }
.avatar { width: 16px; height: 7px; background: #111; flex: none; margin-right: 3px; }
.uname { line-height: 7px; flex: none; width: 72px; color: #333; }
.tops { display: flex; gap: 9px; margin-left: 16px; margin-right: 6px; width: 104px; flex: none; }

/* ribbon */
.ribbon { height: 98px; flex: none; display: flex; background: linear-gradient(#fff 48%, #eef0f0); border-bottom: 1px solid #8c8f92; padding-top: 3px; }
.rgroup { display: flex; flex-direction: column; padding: 2px 6px 0 5px; border-right: 1px solid #d5d5d5; height: 91px; }
.rg1 { padding-left: 7px; }
.rbtns { display: flex; height: 66px; flex: none; }
.rbtn { width: 58px; height: 66px; display: flex; flex-direction: column; align-items: center; padding-top: 2px; flex: none; color: #333; }
.rbtn.wide { width: 94px; }
.rbtn.sel { background: #c8def6; outline: 1px solid #78aee6; outline-offset: -1px; }
.rbtn span { margin-top: 5px; }
.ri { flex: none; }
.rlabel { text-align: center; margin-top: 7px; color: #333; }

/* combos */
.combos { height: 26px; flex: none; display: flex; gap: 3px; background: #cdd0d4; padding: 3px 2px 2px; }
.combo { height: 21px; background: #fff; border: 1px solid #b5b5b5; padding-left: 3px; line-height: 20px; position: relative; }
.combo i { position: absolute; right: 4px; top: 9px; border: 3px solid transparent; border-top: 3px solid #666; }
.c1 { width: 99px; }
.c2 { width: 100px; }

/* main */
.main { height: 845px; flex: none; display: flex; }
.nav { width: 215px; flex: none; border-right: 1px solid #c8c8c8; display: flex; flex-direction: column; position: relative; background: #fff; overflow: hidden; }
.band { height: 12px; background: #d8d9db; flex: none; }
.ptitle { height: 23px; flex: none; background: #f0f0f0; color: #8a8a8a; line-height: 22px; padding-left: 9px; border-top: 1px solid #ddd; border-bottom: 1px solid #d0d0d0; }
.navtools { height: 31px; flex: none; display: flex; align-items: center; gap: 4px; padding: 0 1px 0 7px; background: #f0f0f0; border-bottom: 2px solid #d8d8d8; }
.spark { margin-right: auto; }
.nbtn { width: 22px; height: 24px; border: 1px solid #6aaef0; border-radius: 3px; display: flex; align-items: center; justify-content: center; background: #fff; }
.tree { flex: 1; overflow: hidden; padding-left: 4px; }
.tree li { height: 24px; display: flex; align-items: center; color: #333; position: relative; white-space: nowrap; }
.tree li:first-child { margin-top: 2px; }
.tree .fd { width: 14px; flex: none; margin-right: 6px; }
.tree li > svg { flex: none; }
.tree .s { padding-left: 40px; }
.tree .s > svg { margin-right: 6px; }
.tree .cur { background: linear-gradient(#c6d6ef, #c6d6ef) no-repeat 37px 1px / 140px 22px; }
.vip { width: 30px; height: 10px; background: #f8d868; color: #d9a520; font: bold 7px/10px "Liberation Serif", serif; text-align: center; margin-left: 5px; }
.navsb { position: absolute; right: 4px; top: 240px; width: 7px; height: 506px; background: #c8c8c8; border-radius: 4px; }

/* properties */
.props { width: 284px; flex: none; background: #f0f0f0; display: flex; flex-direction: column; justify-content: flex-end; padding-left: 5px; }
.pbox { width: 275px; height: 236px; background: #fff; border: 1px solid #c8c8c8; border-width: 0 1px 1px 0; overflow: hidden; display: flex; flex-direction: column; justify-content: flex-start; }
.ptable { width: 258px; flex: none; }
.ptable td { height: 21px; border-right: 1px solid #d5d5d5; border-bottom: 1px solid #d5d5d5; padding: 2px 3px 0; white-space: nowrap; overflow: hidden; font-size: 12px; line-height: 17px; }
.ptable .n { width: 21px; background: #ededed; text-align: center; padding: 2px 0 0; color: #555; font-size: 13px; }
.ptable .k { width: 101px; color: #2a5fe8; padding: 2px 0 0 3px; }
.ptable td:nth-child(3) { width: 95px; }
.ptable .c { width: 41px; text-align: center; padding: 0; }
.ptable .off { background: #e8e8e8; }
.rb { font-size: 10px; position: relative; top: -2px; }
.cb { display: inline-block; width: 14px; height: 14px; border: 1px solid #999; border-radius: 2px; vertical-align: middle; }
.pfoot { height: 31px; padding: 4px 0 0 5px; flex: none; }
.btn { font: 12px/16px "Noto Sans CJK SC", "Noto Sans", sans-serif; color: #333; background: #fff; border: 1px solid #d5d5d5; border-radius: 3px; padding: 0; cursor: default; }
.secbtn { width: 79px; height: 23px; }

/* canvas */
.canvas { width: 1135px; flex: none; background: #000; position: relative; margin-top: 1px; overflow: hidden; }
.cad { display: block; }
.ax text { fill: #fff; font: 21px "Liberation Sans", sans-serif; }
.dm text { fill: #fff; font: 20px "Liberation Sans", sans-serif; }
.vtools { position: absolute; right: 1px; top: 0; width: 32px; height: 226px; background: #9a9ea2; border-radius: 3px 3px 0 0; display: flex; flex-direction: column; align-items: center; padding-top: 12px; }
.vtools svg { flex: none; }
.v2 { margin-top: 7px; }
.v3 { margin-top: 6px; }
.v4 { margin-top: 6px; }
.v5 { margin-top: 6px; }
.v6 { margin-top: 6px; }
.v7 { margin-top: 6px; }
.v8 { margin-top: 6px; }
.vsep { margin-top: 6px; }
.v9 { margin-top: 4px; }
.t3d { font: 8px "Liberation Sans", sans-serif; fill: #1e2a36; }
.vtri { width: 0; height: 0; border: 4px solid transparent; border-top: 4px solid #3a4048; border-bottom: 0; flex: none; }
.vsep { width: 26px; height: 1px; background: #666; flex: none; }
.split { width: 4px; flex: none; position: relative; background: #fff; }
.splitbar { position: absolute; left: 0; top: 374px; width: 4px; height: 100px; background: #6b7884; }

/* display panel */
.disp { flex: 1; background: #fff; border-left: 2px solid #d0d0d0; display: flex; flex-direction: column; padding: 0; }
.dtop { height: 12px; flex: none; background: #e8e8e8; position: relative; }
.dx { position: absolute; right: 3px; top: -3px; color: #666; font-size: 13px; }
.disp .ptitle { background: #f0f0f0; }
.dtabs { height: 28px; flex: none; display: flex; gap: 3px; padding: 3px 0 0 1px; background: #fff; border-bottom: 1px solid #d0d0d0; }
.dt { height: 24px; background: #ececec; border-radius: 3px 3px 0 0; color: #666; width: 73px; text-align: center; line-height: 25px; }
.dt.on { background: #fff; width: 76px; height: 25px; border: 1px solid #d0d0d0; border-bottom: 0; color: #2f86e0; }
.dbox { position: relative; margin: 2px 0 0 1px; width: 276px; height: 742px; border: 1px solid #c8c8c8; overflow: hidden; flex: none; }
.dtable { width: 260px; }
.dtable th { height: 21px; background: #f0f0f0; font-weight: 400; border-right: 1px solid #d5d5d5; border-bottom: 1px solid #d5d5d5; color: #333; }
.dtable th:nth-child(1) { width: 134px; }
.dtable th:nth-child(2), .dtable th:nth-child(3) { width: 63px; }
.dtable td { height: 21px; padding: 0; border-right: 1px solid #d5d5d5; border-bottom: 1px solid #d5d5d5; text-align: center; line-height: 20px; position: relative; }
.dtable td:first-child { text-align: left; }
.dtable td i { display: inline-block; width: 13px; height: 14px; border: 1px solid #8e8e8e; border-radius: 2px; vertical-align: middle; position: relative; }
.dtable td i.dis { background: #efefef; border-color: #bdbdbd; }
.dtable td i.h::after { content: ""; position: absolute; inset: 1px; background: #9ecbfa; border-radius: 1px; outline: 1px solid #5aa5f5; outline-offset: -1px; }
.ck { vertical-align: middle; }
.mb { display: inline-block; width: 13px; height: 13px; border: 1px solid #888; border-radius: 2px; background: #fff; position: relative; vertical-align: middle; margin-right: 6px; top: -1px; }
.mb::after { content: ""; position: absolute; left: 2px; right: 2px; top: 5px; height: 1px; background: #555; }
.l0 td:first-child { padding-left: 2px; }
.l1 td:first-child { padding-left: 12px; }
.l2 td:first-child { padding-left: 41px; }
.l2 td:first-child::before { content: ""; position: absolute; left: 19px; width: 16px; top: 10px; height: 1px; background: #d8d8d8; }
.dsb { position: absolute; right: 4px; top: 15px; width: 7px; height: 198px; background: #c8c8c8; border-radius: 4px; }
.dfoot { flex: 1; display: flex; justify-content: flex-end; padding: 6px 9px 0 0; }
.rstbtn { width: 90px; height: 25px; }

/* status */
.status { height: 30px; flex: none; background: #dfe0e3; display: flex; align-items: center; color: #444; }
.sx { flex: none; white-space: nowrap; letter-spacing: .3px; }
.w1 { width: 265px; padding-left: 2px; word-spacing: 2px; }
.w2 { width: 83px; }
.w3 { width: 133px; }
.w4 { width: 103px; }
.w5 { width: 103px; }
.sb { height: 25px; flex: none; background: #d2d2d2; border: 1px solid #a8a8a8; display: flex; align-items: center; margin-right: 3px; padding-left: 3px; position: relative; }
.sb u { position: absolute; right: 4px; top: 11px; border: 3px solid transparent; border-top: 3px solid #555; border-bottom: 0; }
.b1 { width: 25px; }
.b2 { width: 36px; background: #fff; border-color: #3f94ec; }
.b3 { width: 25px; margin-left: 3px; background: #dcdcdc; }
.b4 { width: 36px; }
.b4a { margin-left: 3px; }
.tx { padding: 0; justify-content: center; color: #555; }
.w73 { width: 73px; }
.w61 { width: 61px; }
.hint { margin-left: 2px; flex: none; color: #333; }
.fps { margin-left: auto; margin-right: 37px; flex: none; }
.taskbar { height: 3px; flex: none; display: flex; background: #0b4a7a; }
.tk1 { width: 1442px; background: #0b4a7a; }
.tk2 { width: 162px; background: #8a7363; margin-left: -162px; }

/* dialog */
.dialog { position: absolute; left: 197px; top: 86px; width: 1106px; height: 728px; background: #f0f0f0; border: 1px solid #c8c8c8; border-top: 0; box-shadow: 2px 2px 4px rgba(0,0,0,.25); display: flex; flex-direction: column; }
.dlgtitle { height: 27px; margin: 0 -1px; flex: none; background: #2e7fe0; color: #fff; line-height: 27px; padding-left: 8px; display: flex; justify-content: space-between; align-items: center; }
.winbtns { display: flex; gap: 19px; padding-right: 8px; }
.dlgtabs { height: 40px; flex: none; padding: 15px 0 0 11px; display: flex; gap: 3px; align-items: flex-end; }
.tab { width: 60px; height: 21px; line-height: 21px; text-align: center; background: #e2e2e2; color: #666; border-radius: 2px 2px 0 0; }
.tab.on { background: #fff; color: #2f86e0; height: 25px; width: 61px; line-height: 24px; border: 1px solid #d0d0d0; border-bottom: 0; margin-bottom: -1px; margin-right: 1px; position: relative; z-index: 1; }
.pane { margin-left: 11px; width: 1082px; height: 616px; flex: none; background: #fff; border: 1px solid #c8c8c8; display: flex; gap: 6px; padding: 8px 0 0 9px; }
.clist { width: 120px; height: 597px; border: 1px solid #c0c0c0; position: relative; flex: none; padding: 1px 0 0 1px; }
.clist ul { height: 582px; overflow: hidden; }
.clist li { height: 30px; line-height: 29px; padding-left: 2px; width: 103px; white-space: nowrap; color: #222; word-spacing: 1.500px; }
.clist li.on { height: 28px; margin-bottom: 2px; background: #b3cdec; }
.lsbv { position: absolute; left: 107px; top: 14px; width: 8px; height: 526px; background: #c8c8c8; border-radius: 4px; }
.lsbh { position: absolute; left: 14px; top: 585px; width: 71px; height: 8px; background: #c8c8c8; border-radius: 4px; }
.cright { width: 937px; flex: none; }
.gwrap { position: relative; width: 937px; height: 575px; border: 1px solid #c8c8c8; overflow: hidden; }
.grid { width: 920px; }
.grid th { height: 20px; background: #f0f0f0; font-weight: 400; border-right: 1px solid #d5d5d5; border-bottom: 1px solid #d5d5d5; color: #444; }
.grid th.no { width: 21px; }
.grid th.nh { width: 351px; }
.grid th.vh { background: #7eb8f8; color: #fff; border: 1px solid #5c9fe8; }
.grid td { height: 21px; padding: 0 0 0 4px; border-right: 1px solid #d5d5d5; border-bottom: 1px solid #d5d5d5; white-space: nowrap; position: relative; line-height: 20px; color: #222; overflow: hidden; }
.grid td.no { background: #f0f0f0; text-align: center; padding: 0; color: #555; font-size: 13px; border-right-color: #d0d0d0; }
.grid td.act { background: #6aaef0; color: #fff; font-weight: 700; }
.grid td.nm { background: #ffffd0; padding-left: 32px; }
.grid td.nm::before { content: ""; position: absolute; left: 10px; width: 15px; top: 10px; height: 1px; background: #e0e0c0; }
.gp .nm { color: #999; padding-left: 22px !important; }
.gp .nm::before { display: none; }
.gp .mb { position: absolute; left: 4px; top: 4px; width: 11px; height: 11px; }
.gp .mb::after { top: 4px; }
.grid td.hl { background: #ffff80; }
.grid td.ed { box-shadow: inset 0 2px 0 #6ea8e6, inset 2px 0 0 #6ea8e6, inset -1px 0 0 #6ea8e6; }
.grid td.ed::after { content: ""; position: absolute; right: 7px; top: 9px; border: 3px solid transparent; border-bottom: 3px solid #555; border-top: 0; }
.popup { position: absolute; left: 374px; top: 123px; width: 545px; height: 151px; background: #fff; border: 1px solid #3aa9d6; color: #888; }
.popup li { height: 25px; line-height: 24px; padding-left: 3px; }
.popup li.on { background: #d9f3fb; color: #2b7fc1; }
.gsb { position: absolute; left: 923px; top: 14px; width: 8px; height: 330px; background: #c8c8c8; border-radius: 4px; }
.ghint { margin: 7px 0 0; color: #333; }
.dlgfoot { flex: none; display: flex; gap: 7px; padding: 8px 0 0 11px; }
.dlgfoot .btn { width: 79px; height: 24px; }
.grip { position: absolute; right: 3px; bottom: 3px; }

/* overlays */
.cpu { position: absolute; left: 1620px; top: 1px; width: 70px; height: 70px; filter: drop-shadow(0 0 3px #ddd); }
.cpu svg { display: block; }
.cpun { position: absolute; left: 16px; top: 11px; font: 300 25px/27px "Noto Sans", sans-serif; color: #333; }
.cpun small { font-size: 13px; }
.cput { position: absolute; left: 28px; top: 41px; font-size: 10px; line-height: 14px; color: #444; }
.sogou { position: absolute; left: 1509px; top: 892px; width: 207px; height: 22px; background: #fff; border: 1px solid #ddd; display: flex; align-items: center; padding-left: 32px; gap: 7px; }
.slogo { position: absolute; left: -1px; top: -5px; }
.szh { font-size: 15px; font-weight: 700; color: #2b7fd0; }
.edge { position: absolute; right: 0; top: 377px; width: 9px; height: 60px; background: #3a4650; border-radius: 3px 0 0 3px; padding: 10px 0 0 5px; }
.edge span { display: block; width: 2px; height: 40px; background: repeating-linear-gradient(#5ab0f0 0 2px, transparent 2px 4px); }
```
